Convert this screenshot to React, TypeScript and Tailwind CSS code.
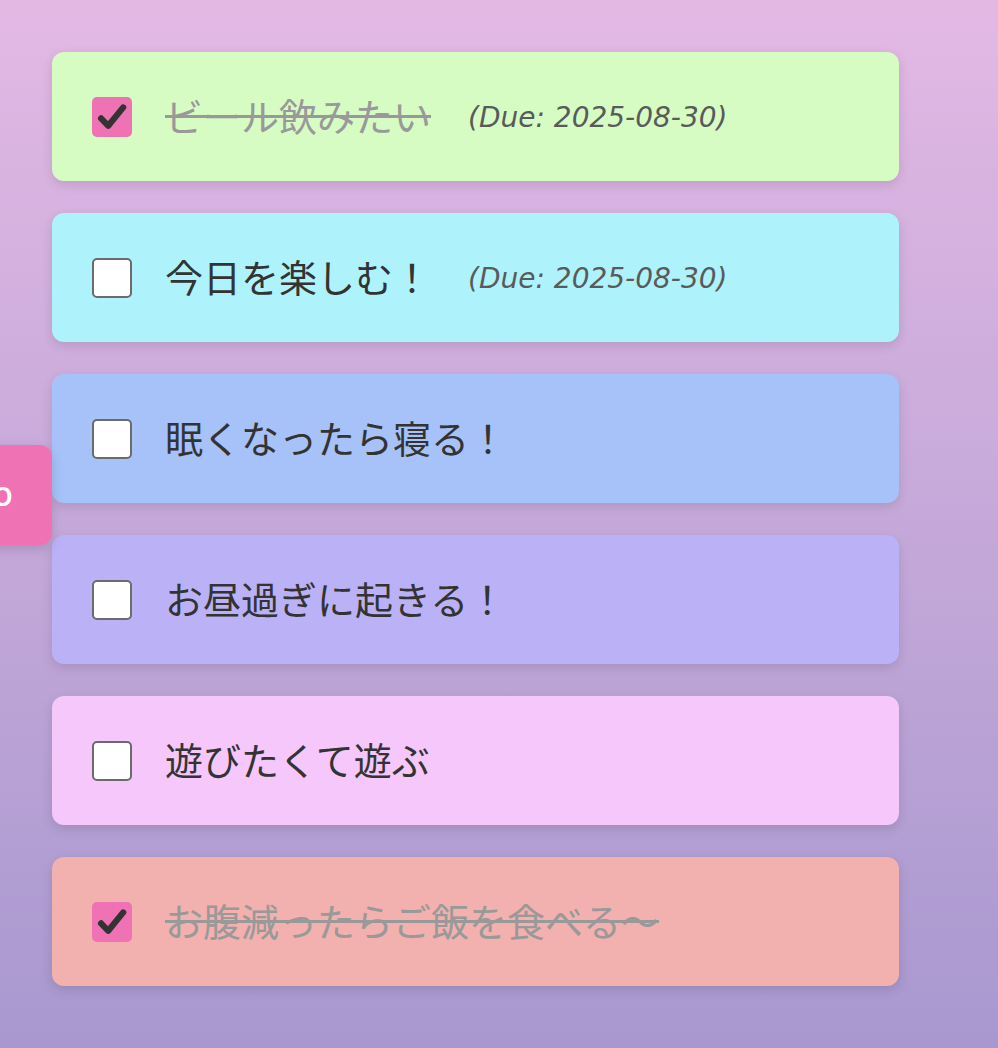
import { useState } from "react";

interface Todo {
	id: number;
	text: string;
	done: boolean;
	due?: string;
	color: string;
}

const initialTodos: Todo[] = [
	{ id: 1, text: "ビール飲みたい", done: true, due: "2025-08-30", color: "bg-[#d6fcc4]" },
	{ id: 2, text: "今日を楽しむ！", done: false, due: "2025-08-30", color: "bg-[#aef3fc]" },
	{ id: 3, text: "眠くなったら寝る！", done: false, color: "bg-[#a6c2f8]" },
	{ id: 4, text: "お昼過ぎに起きる！", done: false, color: "bg-[#bab1f7]" },
	{ id: 5, text: "遊びたくて遊ぶ", done: false, color: "bg-[#f5c7fa]" },
	{ id: 6, text: "お腹減ったらご飯を食べる〜", done: true, color: "bg-[#f2b0ae]" },
];

function CheckBox({ checked, onToggle }: { checked: boolean; onToggle: () => void }) {
	return (
		<button
			type="button"
			onClick={onToggle}
			aria-pressed={checked}
			className={[
				"flex h-10 w-10 shrink-0 cursor-pointer items-center justify-center rounded-[5px] p-0",
				checked ? "border-0 bg-[#ee72b4]" : "border-2 border-[#6b6b6b] bg-white",
			].join(" ")}
		>
			{checked ? (
				<svg viewBox="0 0 24 24" className="h-[32px] w-[32px]" aria-hidden="true">
					<path
						d="M3.8 13 L9.2 18.6 L20.4 4.8"
						fill="none"
						stroke="#333333"
						strokeWidth="4.6"
						strokeLinecap="round"
						strokeLinejoin="round"
					/>
				</svg>
			) : null}
		</button>
	);
}

export default function App() {
	const [todos, setTodos] = useState(initialTodos);

	const toggle = (id: number) => {
		setTodos((current) =>
			current.map((todo) => (todo.id === id ? { ...todo, done: !todo.done } : todo)),
		);
	};

	return (
		<div className="relative min-h-screen w-full overflow-hidden bg-gradient-to-b from-[#e3b9e4] to-[#a898cf] pt-[52px] pb-[62px] pl-[52px] font-['Noto_Sans_CJK_JP',sans-serif]">
			<button
				type="button"
				className="absolute top-[445px] -left-[100px] flex h-[100px] w-[152px] items-center justify-end rounded-xl border-0 bg-[#ee72b4] pr-[39px] pb-1 text-[34px] font-medium text-white shadow-[0_4px_12px_rgba(0,0,0,0.15)] font-['Noto_Sans',sans-serif]"
			>
				Todo
			</button>
			<ul className="m-0 flex list-none flex-col gap-8 p-0">
				{todos.map((todo) => (
					<li
						key={todo.id}
						className={[
							"flex h-[129px] w-[847px] items-center rounded-xl pl-10 shadow-[0_4px_12px_rgba(0,0,0,0.12)]",
							todo.color,
						].join(" ")}
					>
						<CheckBox checked={todo.done} onToggle={() => toggle(todo.id)} />
						<span
							className={[
								"ml-[33px] mb-[3px] text-[38px] leading-none",
								todo.done ? "text-[#999999] line-through decoration-[3px]" : "text-[#333333]",
							].join(" ")}
						>
							{todo.text}
						</span>
						{todo.due ? (
							<span className="mt-[3px] ml-[37px] text-[28px] italic text-[#5a5a5a] font-['Comic_Sans_MS','DejaVu_Sans',sans-serif]">
								(Due: {todo.due})
							</span>
						) : null}
					</li>
				))}
			</ul>
		</div>
	);
}
